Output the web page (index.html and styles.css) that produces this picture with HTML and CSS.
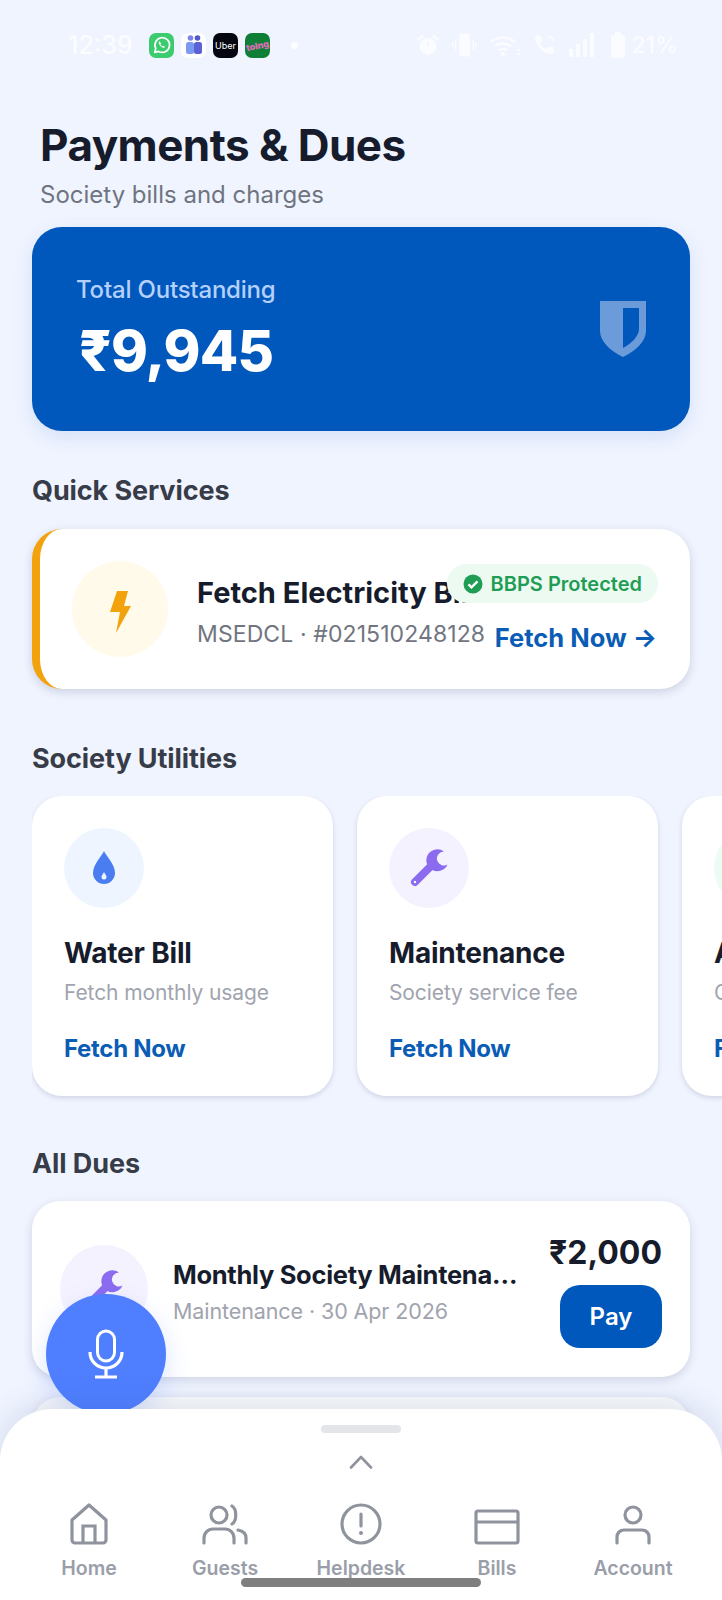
FILE: index.html
```html
<!DOCTYPE html>
<html lang="en">
<head>
<meta charset="utf-8">
<title>Payments &amp; Dues</title>
<link rel="stylesheet" href="styles.css">
</head>
<body>
<div class="screen">
  <div class="status">
    <span class="time">12:39</span>
    <div class="apps">
      <span class="app app-wa"><svg viewBox="0 0 24 24" width="22" height="22"><path d="M4 20l1.2-4.2A8 8 0 1 1 8.300 19z" fill="none" stroke="#fff" stroke-width="1.800" stroke-linejoin="round"/><path d="M9 8c-1 1-.6 3 1.300 5s4 2.400 5 1.300l-1.700-1.500-1.100.6c-1-.4-1.800-1.300-2.200-2.200l.7-1.100z" fill="#fff"/></svg></span>
      <span class="app app-teams"><svg viewBox="0 0 24 24" width="24" height="24"><circle cx="8.500" cy="5" r="2.800" fill="#7b83eb"/><circle cx="15.500" cy="5" r="2.800" fill="#5059c9"/><rect x="4" y="9" width="8" height="12" rx="2.500" fill="#7b9bf0"/><rect x="12" y="9" width="8" height="12" rx="2.500" fill="#5a62d6"/></svg></span>
      <span class="app app-uber">Uber</span>
      <span class="app app-tata"><span class="tata-word">tolng</span></span>
      <span class="dot"></span>
    </div>
    <div class="sys">
      <svg viewBox="0 0 24 24" width="24" height="26"><circle cx="12" cy="13.500" r="8.500" fill="#fff"/><path d="M2.500 6.500L6.500 3M21.500 6.500L17.500 3" stroke="#fff" stroke-width="2.400" stroke-linecap="round"/><path d="M12 9v5" stroke="#f0f4ff" stroke-width="1.400"/></svg>
      <svg viewBox="0 0 24 24" width="25" height="26"><rect x="7" y="1" width="10" height="22" rx="1.500" fill="#fff"/><path d="M3.500 7v10M20.500 7v10M1 10v4M23 10v4" stroke="#fff" stroke-width="1.500"/></svg>
      <svg viewBox="0 0 32 24" width="32" height="24"><path d="M2 9a18 18 0 0 1 24 0M6 13.500a12 12 0 0 1 16 0M10 17.500a6 6 0 0 1 8 0" fill="none" stroke="#fff" stroke-width="2.500"/><circle cx="14" cy="21" r="2.200" fill="#fff"/><path d="M28 17h3M28 21h3" stroke="#fff" stroke-width="2"/></svg>
      <svg viewBox="0 0 24 24" width="24" height="24"><path d="M4 2l4.500 1 1 5-2.500 2c1.200 2.800 3 4.700 6 6l2-2.500 5 1 1 4.500-2 2C10 21 3 13 2 4z" fill="#fff"/><path d="M15 3c3 .6 5 2.800 5.500 5.500" fill="none" stroke="#fff" stroke-width="1.600"/></svg>
      <svg viewBox="0 0 26 24" width="26" height="24"><path d="M0 16h4v8H0zM7 11h4v13H7zM14 6h4v18h-4zM21 0h4v24h-4z" fill="#fff"/></svg>
      <svg class="s-bat" viewBox="0 0 16 26" width="16" height="26"><rect x="1" y="3" width="14" height="23" rx="2" fill="#fff"/><rect x="5" y="0" width="6" height="3" fill="#fff"/></svg>
      <span class="pct">21%</span>
    </div>
  </div>

  <header class="head">
    <h1 class="title">Payments &amp; Dues</h1>
    <p class="subtitle">Society bills and charges</p>
  </header>

  <main class="content">
    <section class="hero">
      <div>
        <div class="hero-label">Total Outstanding</div>
        <div class="hero-amount">₹9,945</div>
      </div>
      <svg class="hero-shield" viewBox="0 0 46 56" width="46" height="56"><path fill-rule="evenodd" d="M0 0h46v30c0 10-10 20-23 26C10 50 0 40 0 30zM23 7v40c8-4 16-12 16-19V7z" fill="#6b9bd9"/></svg>
    </section>

    <h2 class="sec sec-quick">Quick Services</h2>
    <section class="elec">
      <span class="elec-icon"><svg viewBox="0 0 24 42" width="24" height="42"><path d="M9 0h11l-4 15h7L8 42l4-21H2z" fill="#f2a20c"/></svg></span>
      <div class="elec-text">
        <div class="elec-title">Fetch Electricity Bill</div>
        <div class="elec-sub">MSEDCL · #021510248128</div>
      </div>
      <div class="badge"><svg viewBox="0 0 20 20" width="20" height="20"><circle cx="10" cy="10" r="9.500" fill="#1f9d55"/><path d="M5.500 10.300l3 3 6-6" fill="none" stroke="#fff" stroke-width="2.400"/></svg><span>BBPS Protected</span></div>
      <div class="elec-cta">Fetch Now →</div>
    </section>

    <h2 class="sec sec-util">Society Utilities</h2>
    <section class="utils">
      <article class="util">
        <span class="util-icon ic-water"><svg viewBox="0 0 24 34" width="24" height="34"><path fill-rule="evenodd" d="M12 0c2 5 11 13 11 22a11 11 0 0 1-22 0C1 13 10 5 12 0zM12 21c-1 2-2.500 3.500-2.500 5a2.500 2.500 0 0 0 5 0c0-1.500-1.500-3-2.500-5z" fill="#4a7ef0"/></svg></span>
        <h3 class="util-title">Water Bill</h3>
        <p class="util-desc">Fetch monthly usage</p>
        <div class="util-cta">Fetch Now</div>
      </article>
      <article class="util">
        <span class="util-icon ic-maint"><svg viewBox="0 0 38 38" width="38" height="38"><path d="M5 33L20 18" stroke="#8b6cef" stroke-width="8" stroke-linecap="round"/><path d="M34 2.500A11 11 0 1 0 37.500 15.500A7 7 0 1 1 34 2.500z" fill="#8b6cef"/><circle cx="5" cy="33" r="1.200" fill="#fff"/></svg></span>
        <h3 class="util-title">Maintenance</h3>
        <p class="util-desc">Society service fee</p>
        <div class="util-cta">Fetch Now</div>
      </article>
      <article class="util">
        <span class="util-icon ic-green"></span>
        <h3 class="util-title">Amenities</h3>
        <p class="util-desc">Club and pool</p>
        <div class="util-cta">Fetch Now</div>
      </article>
    </section>

    <h2 class="sec sec-dues">All Dues</h2>
    <section class="due">
      <span class="due-icon"><svg viewBox="0 0 38 38" width="38" height="38"><path d="M5 33L20 18" stroke="#8b6cef" stroke-width="8" stroke-linecap="round"/><path d="M34 2.500A11 11 0 1 0 37.500 15.500A7 7 0 1 1 34 2.500z" fill="#8b6cef"/></svg></span>
      <div class="due-text">
        <div class="due-title">Monthly Society Maintenance</div>
        <div class="due-sub">Maintenance · 30 Apr 2026</div>
      </div>
      <div class="due-side">
        <div class="due-amount">₹2,000</div>
        <div class="pay">Pay</div>
      </div>
    </section>
    <section class="due due-next"></section>
  </main>

  <button class="fab" aria-label="Voice"><svg viewBox="0 0 36 50" width="36" height="50"><rect x="9.500" y="2" width="17" height="30" rx="8.500" fill="none" stroke="#fff" stroke-width="3"/><path d="M2 23c0 9 7 16 16 16s16-7 16-16M18 39v8M7 48h22" fill="none" stroke="#fff" stroke-width="3.200"/></svg></button>

  <nav class="sheet">
    <span class="handle"></span>
    <svg class="chev" viewBox="0 0 24 14" width="24" height="14"><path d="M2 12.500L12 2l10 10.500" fill="none" stroke="#8f939e" stroke-width="2.600" stroke-linecap="round" stroke-linejoin="round"/></svg>
    <div class="tabs">
      <div class="tab"><svg viewBox="0 0 40 42" width="40" height="42"><path d="M3 17L20 2l17 15v20a3 3 0 0 1-3 3H6a3 3 0 0 1-3-3z" fill="none" stroke="#8f939e" stroke-width="3.200" stroke-linejoin="round"/><path d="M14 39V23h12v16" fill="none" stroke="#8f939e" stroke-width="3.200"/></svg><span>Home</span></div>
      <div class="tab"><svg viewBox="0 0 46 42" width="46" height="42"><circle cx="17" cy="12" r="8" fill="none" stroke="#8f939e" stroke-width="3.200"/><path d="M30 3c5 3 5 15 0 18M2 40v-5c0-5 4-9 9-9h12c5 0 9 4 9 9v5M36 27c5 1 8 4 8 8v5" fill="none" stroke="#8f939e" stroke-width="3.200" stroke-linecap="round"/></svg><span>Guests</span></div>
      <div class="tab"><svg viewBox="0 0 42 42" width="42" height="42"><circle cx="21" cy="21" r="19" fill="none" stroke="#8f939e" stroke-width="3.200"/><path d="M21 11v12" stroke="#8f939e" stroke-width="3.200" stroke-linecap="round"/><circle cx="21" cy="30" r="2" fill="#8f939e"/></svg><span>Helpdesk</span></div>
      <div class="tab"><svg viewBox="0 0 46 36" width="46" height="36"><rect x="2" y="2" width="42" height="32" rx="2" fill="none" stroke="#8f939e" stroke-width="3.200"/><path d="M2 13h42" stroke="#8f939e" stroke-width="3.200"/></svg><span>Bills</span></div>
      <div class="tab"><svg viewBox="0 0 36 40" width="36" height="40"><circle cx="18" cy="10" r="8" fill="none" stroke="#8f939e" stroke-width="3.200"/><path d="M2 38v-6c0-4 3-7 7-7h18c4 0 7 3 7 7v6" fill="none" stroke="#8f939e" stroke-width="3.200" stroke-linecap="round"/></svg><span>Account</span></div>
    </div>
    <span class="home-bar"></span>
  </nav>
</div>
</body>
</html>
```
FILE: styles.css
```css
* { box-sizing: border-box; }
html, body { margin: 0; padding: 0; height: 1600px; overflow: hidden; }
body { font-family: Inter, "Noto Sans", sans-serif; background: #f0f4ff; }
.screen { position: relative; width: 722px; height: 1600px; overflow: hidden; background: #f0f4ff; }

.status { display: flex; align-items: center; height: 30px; margin-top: 30px; padding: 0 44px 0 68px; }
.time { width: 81px; font-size: 25px; font-weight: 500; color: #fff; opacity: 0.8; }
.apps { display: flex; align-items: center; gap: 7px; }
.app { display: flex; align-items: center; justify-content: center; width: 25px; height: 25px; border-radius: 7px; overflow: hidden; }
.app-wa { background: #3ccb6e; }
.app-teams { background: #fff; }
.app-uber { background: #05060f; color: #fff; font-size: 9px; }
.app-tata { background: #0f7f37; }
.tata-word { color: #e66bc0; font-size: 9px; font-weight: 800; transform: rotate(-12deg); }
.dot { width: 7px; height: 7px; margin-left: 14px; border-radius: 50%; background: #fff; opacity: 0.8; }
.sys { display: flex; align-items: center; gap: 12px; margin-left: auto; opacity: 0.75; }
.s-bat { margin-left: 3px; }
.pct { margin-left: -7px; font-size: 23px; font-weight: 500; color: #fff; }

.head { padding: 63px 40px 0; }
.title { margin: 0; font-size: 44px; line-height: 44px; font-weight: 700; letter-spacing: -0.55px; color: #161c2c; }
.subtitle { margin: 13px 0 0; font-size: 24px; line-height: 30px; color: #6f7480; }

.content { padding: 0 32px; margin-top: 17px; }
.hero { display: flex; align-items: center; justify-content: space-between; height: 204px; padding: 0 44px; border-radius: 30px; background: #0058bc; box-shadow: 0 6px 20px rgba(0, 88, 188, 0.12); }
.hero-label { font-size: 24px; line-height: 30px; font-weight: 500; letter-spacing: -0.2px; color: #b5d0fa; }
.hero-amount { margin: 14px 0 0 3px; font-size: 56px; line-height: 64px; font-weight: 800; letter-spacing: -0.8px; color: #fff; }
.hero-shield { display: block; }

.sec { margin: 0; font-size: 27px; line-height: 34px; font-weight: 700; letter-spacing: -0.1px; color: #373c48; }
.sec-quick { margin-top: 43px; }
.sec-util { margin-top: 53px; }
.sec-dues { margin-top: 51px; }

.elec { position: relative; display: flex; align-items: center; height: 160px; margin-top: 21px; padding-left: 32px; border-left: 8px solid #f2a20c; border-radius: 30px; background: #fff; box-shadow: 0 3px 10px rgba(40, 50, 90, 0.18); }
.elec-icon { display: flex; align-items: center; justify-content: center; flex: none; width: 96px; height: 96px; padding-top: 6px; border-radius: 50%; background: #fffaea; }
.elec-text { margin-left: 29px; padding-top: 5px; min-width: 0; }
.elec-title { font-size: 29px; line-height: 36px; font-weight: 700; white-space: nowrap; color: #161c2c; }
.elec-sub { margin-top: 8px; font-size: 23px; line-height: 30px; letter-spacing: 0.1px; white-space: nowrap; color: #71757f; }
.badge { position: absolute; top: 35px; right: 32px; display: flex; align-items: center; gap: 8px; height: 39px; padding: 0 16px; border-radius: 20px; background: #edfaf2; font-size: 20px; font-weight: 600; color: #1f9d55; }
.elec-cta { position: absolute; top: 93px; right: 33px; font-size: 25.500px; line-height: 32px; font-weight: 700; color: #0b5cb5; }

.utils { display: flex; gap: 24px; margin-top: 20px; margin-right: -32px; overflow: hidden; padding-bottom: 6px; margin-bottom: -6px; }
.util { flex: none; width: 301px; height: 300px; padding: 32px 32px 0; border-radius: 30px; background: #fff; box-shadow: 0 2px 5px rgba(40, 50, 90, 0.16); }
.util-icon { display: flex; align-items: center; justify-content: center; width: 80px; height: 80px; border-radius: 50%; }
.ic-water { background: #eff5ff; }
.ic-maint { background: #f5f2ff; }
.ic-green { background: #ecfbf3; }
.util-title { margin: 28px 0 0; font-size: 28px; line-height: 34px; font-weight: 700; letter-spacing: -0.2px; white-space: nowrap; color: #161c2c; }
.util-desc { margin: 8px 0 0; font-size: 21px; line-height: 30px; letter-spacing: -0.1px; white-space: nowrap; color: #a0a4ae; }
.util-cta { margin-top: 26px; font-size: 24px; line-height: 30px; font-weight: 700; letter-spacing: -0.3px; white-space: nowrap; color: #0b5cb5; }

.due { display: flex; align-items: center; height: 176px; margin-top: 20px; padding: 0 28px; border-radius: 28px; background: #fff; box-shadow: 0 3px 10px rgba(40, 50, 90, 0.16); }
.due-icon { display: flex; align-items: center; justify-content: center; flex: none; width: 88px; height: 88px; border-radius: 50%; background: #f5f2ff; }
.due-text { flex: 1; min-width: 0; margin: 0 25px; padding-top: 6px; }
.due-title { font-size: 25.500px; line-height: 32px; font-weight: 700; letter-spacing: -0.3px; white-space: nowrap; overflow: hidden; text-overflow: ellipsis; color: #161c2c; }
.due-sub { margin-top: 5px; font-size: 21.500px; line-height: 30px; letter-spacing: -0.1px; white-space: nowrap; color: #a0a4ae; }
.due-side { display: flex; flex: none; flex-direction: column; align-items: flex-end; padding-top: 2px; }
.due-amount { font-size: 32px; line-height: 40px; font-weight: 700; color: #161c2c; }
.pay { display: flex; align-items: center; justify-content: center; width: 102px; height: 63px; margin-top: 12px; border-radius: 20px; background: #0058bc; font-size: 24px; font-weight: 600; color: #fff; }
.due-next { margin-top: 20px; background: #fafbfb; }

.fab { position: absolute; left: 46px; top: 1294px; display: flex; align-items: center; justify-content: center; width: 120px; height: 120px; padding: 0; border: 0; border-radius: 50%; background: #4f7fff; box-shadow: 0 8px 24px rgba(79, 127, 255, 0.2); }

.sheet { position: absolute; left: 0; right: 0; top: 1409px; display: flex; flex-direction: column; align-items: center; height: 191px; padding-top: 16px; border-radius: 52px 52px 0 0; background: #fff; box-shadow: 0 -6px 30px rgba(60, 80, 140, 0.14); }
.handle { width: 80px; height: 8px; border-radius: 4px; background: #e4e5e9; }
.chev { display: block; margin-top: 22px; }
.tabs { display: grid; grid-template-columns: repeat(5, 136px); margin-top: 33px; }
.tab { display: flex; flex-direction: column; align-items: center; justify-content: flex-end; height: 78px; font-size: 19.500px; line-height: 24px; font-weight: 600; color: #9a9ea9; }
.tab svg { display: block; margin-bottom: 11px; }
.home-bar { position: absolute; left: 241px; top: 169px; width: 240px; height: 9px; border-radius: 5px; background: #7f7f7f; }
```
